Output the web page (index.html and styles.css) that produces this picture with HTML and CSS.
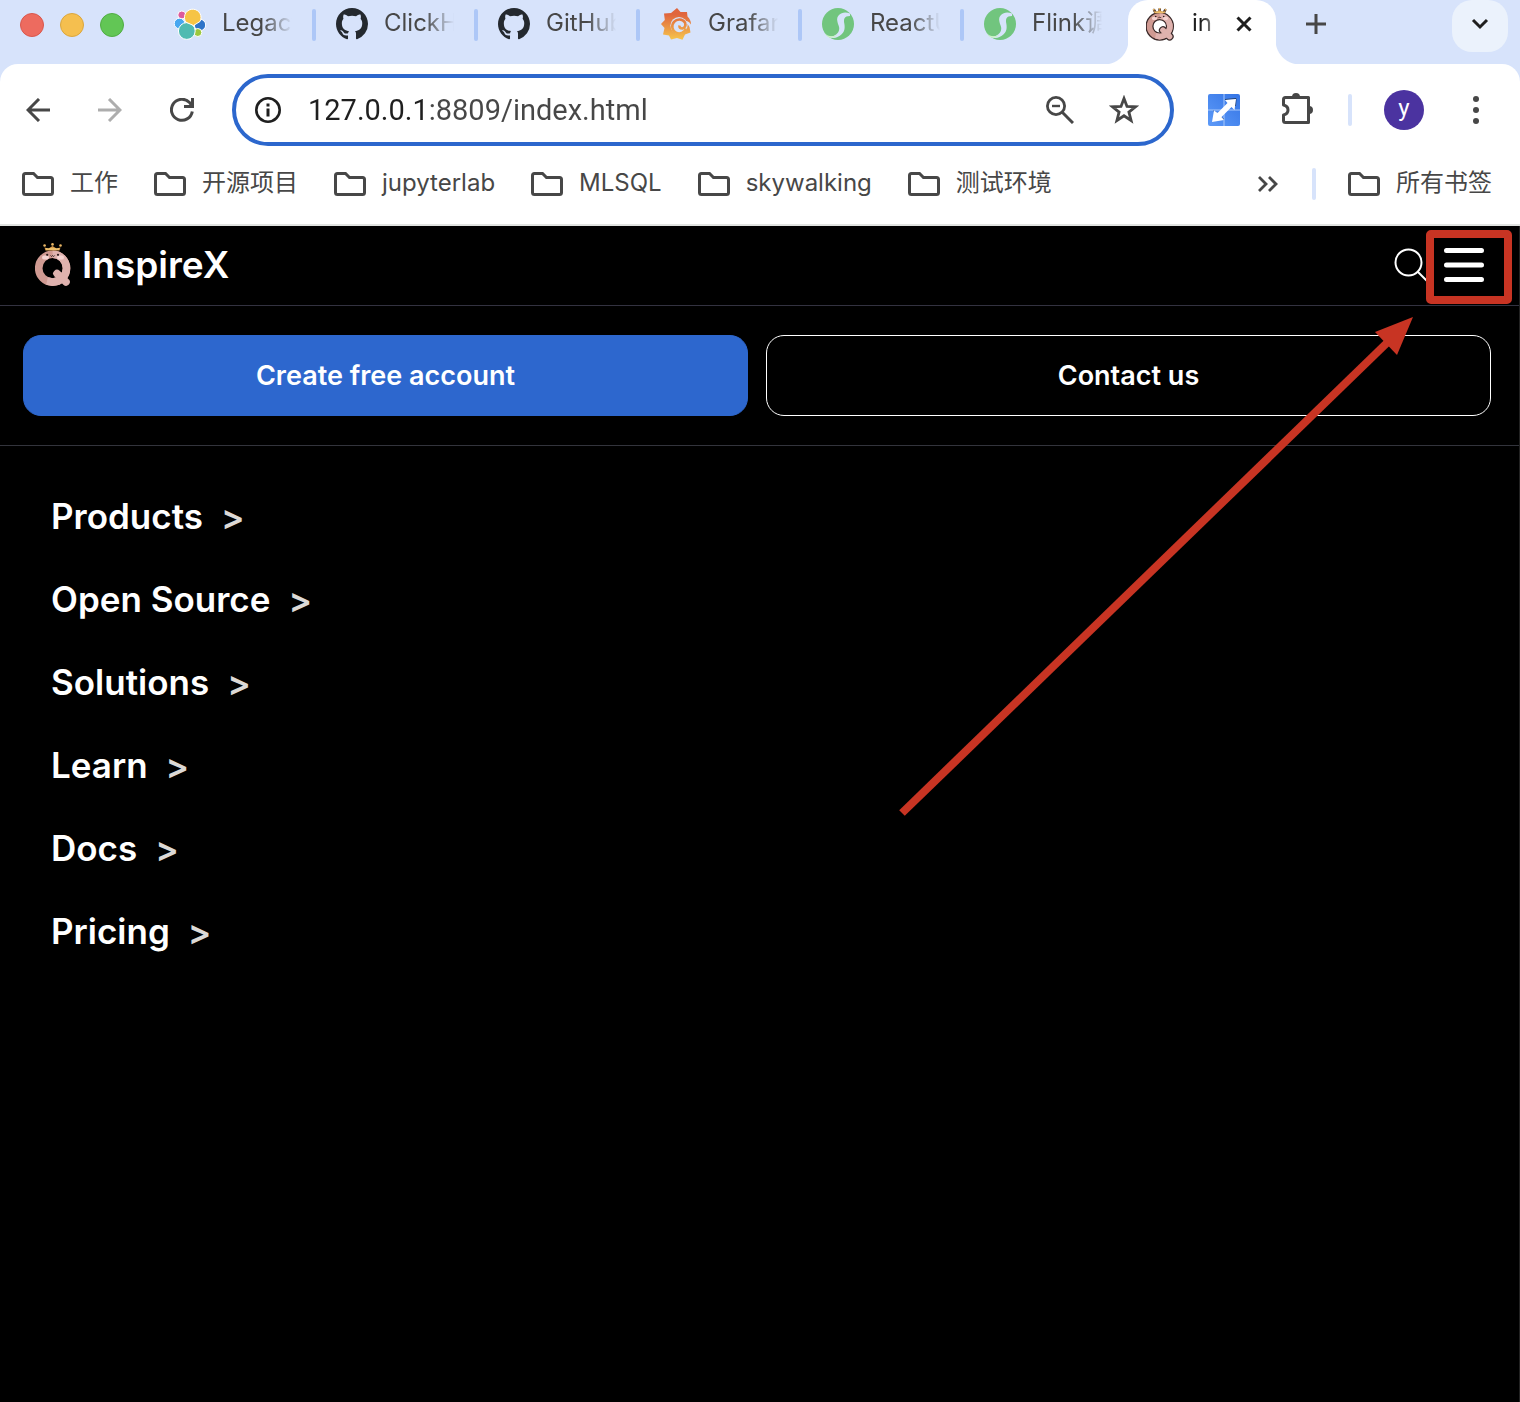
FILE: index.html
```html
<!DOCTYPE html>
<html lang="zh-CN">
<head>
<meta charset="utf-8">
<meta name="viewport" content="width=device-width, initial-scale=1">
<title>InspireX</title>
<link rel="stylesheet" href="styles.css">
</head>
<body>
<svg class="sprite" aria-hidden="true">
  <symbol id="github" viewBox="0 0 16 16"><path fill="#24292f" d="M8 0C3.58 0 0 3.58 0 8c0 3.54 2.29 6.53 5.47 7.59.4.07.55-.17.55-.38 0-.19-.01-.82-.01-1.49-2.01.37-2.53-.49-2.69-.94-.09-.23-.48-.94-.82-1.13-.28-.15-.68-.52-.01-.53.63-.01 1.08.58 1.23.82.72 1.21 1.87.87 2.33.66.07-.52.28-.87.51-1.07-1.78-.2-3.64-.89-3.64-3.95 0-.87.31-1.59.82-2.15-.08-.2-.36-1.02.08-2.12 0 0 .67-.21 2.2.82.64-.18 1.32-.27 2-.27s1.36.09 2 .27c1.53-1.04 2.2-.82 2.2-.82.44 1.1.16 1.92.08 2.12.51.56.82 1.27.82 2.15 0 3.07-1.87 3.75-3.65 3.95.29.25.54.73.54 1.48 0 1.07-.01 1.93-.01 2.2 0 .21.15.46.55.38A8.01 8.01 0 0 0 16 8c0-4.42-3.58-8-8-8z"/></symbol>
  <symbol id="skywave" viewBox="0 0 32 32"><circle cx="16" cy="16" r="16" fill="#71c57e"/><path fill="#d7e3fb" d="M28 5.500C21 2.500 14 6.500 15.300 13C16 17.500 18.300 19 16.800 23C15 27 11.500 28.600 7 28.700C10 30.500 13 30.200 15.500 29C22.500 25.500 23.200 21.500 22.400 16C21.500 11 22 8 28 8Z"/><path fill="#c9f3c4" d="M2.500 25C6 29 12 29 15.500 26.500C12 31 7 30.500 4.500 27.500Z"/></symbol>
  <symbol id="folder" viewBox="0 0 32 24"><path d="M3.500 1.500H11.500L15.500 5.500H28.500Q30.500 5.500 30.500 7.500V20.500Q30.500 22.500 28.500 22.500H3.500Q1.500 22.500 1.500 20.500V3.500Q1.500 1.500 3.500 1.500Z" fill="none" stroke="#474747" stroke-width="3"/></symbol>
  <symbol id="mascot" viewBox="0 0 36 44">
    <circle cx="17.600" cy="25.200" r="13.900" fill="none" stroke="#d09a92" stroke-width="7.600"/>
    <path d="M17.600 11.300A13.900 13.900 0 0 1 17.600 39.100L12 38" fill="none" stroke="#dfb2ae" stroke-width="7.600"/>
    <path d="M22 30.500L31 39" stroke="#dfb2ae" stroke-width="7.600" stroke-linecap="round"/>
    <path d="M9 14.500H12M24 14.500H27" stroke="#f5d4d2" stroke-width="4" stroke-linecap="round"/>
    <circle cx="12.200" cy="11.800" r="1.100" fill="#2a1d1d"/><circle cx="23" cy="11.800" r="1.100" fill="#2a1d1d"/>
    <path d="M15.600 12.500Q16.600 14.500 17.600 12.500Q18.600 14.500 19.600 12.500" fill="none" stroke="#2a1d1d"/>
    <path d="M9.500 4.500L13.500 5.500L17.500 3L21.500 5.500L25.500 4.500L24.500 7.500H10.500Z" fill="#d99d4d"/>
    <path d="M11 6H24" stroke="#ffe08a"/>
    <circle cx="9.600" cy="2.500" r="1.300" fill="#eab765"/><circle cx="17.500" cy="1.400" r="1.300" fill="#eab765"/><circle cx="25.500" cy="2.500" r="1.300" fill="#eab765"/>
  </symbol>
</svg>

<header class="browser">
  <div class="tab-strip">
    <div class="lights"><span class="light light-red"></span><span class="light light-yellow"></span><span class="light light-green"></span></div>
    <div class="tabs">
      <div class="tab">
        <svg class="favicon" viewBox="0 0 32 32"><g stroke="#fff"><circle cx="7.800" cy="7" r="4" fill="#dd5b9c"/><circle cx="5.500" cy="15.500" r="5.300" fill="#47a7f0"/><circle cx="26" cy="17" r="5.700" fill="#2d73c8"/><circle cx="23.800" cy="24.500" r="4" fill="#9bc83d"/><circle cx="12.800" cy="23" r="8.400" fill="#50bbb1"/><path d="M11 12.500A8.300 8.300 0 1 1 26 13.500L19.500 17.500L12 14.200Z" fill="#f6c445"/></g></svg>
        <span class="tab-title">Legacy</span>
      </div>
      <div class="tab"><svg class="favicon"><use href="#github"/></svg><span class="tab-title">ClickHouse</span></div>
      <div class="tab"><svg class="favicon"><use href="#github"/></svg><span class="tab-title">GitHub</span></div>
      <div class="tab">
        <svg class="favicon" viewBox="0 0 32 32"><defs><linearGradient id="flame" gradientUnits="userSpaceOnUse" x1="0" y1="0" x2="0" y2="32"><stop offset=".2" stop-color="#e0653e"/><stop offset="1" stop-color="#f6c64b"/></linearGradient></defs><path fill="url(#flame)" d="M17 0L20.500 4L27 4L27.500 8.500Q31 12 31 16L29.500 19L30.500 24.500L25 26.500L22.500 31.800L17 30L11 31.500L9 27.500L3 26.500L4.500 20L1 16L4.800 12L4 5.500L11 5Z"/><circle cx="19" cy="17.500" r="8.600" fill="#d7e3fb"/><path d="M25 14Q29 14.500 30.500 18.500" fill="none" stroke="#d7e3fb" stroke-width="2.500"/><path d="M26 20.500A7 7 0 1 1 25 14.500Q26.500 19 22.500 20.500Q19 20.500 19.500 17.500" fill="none" stroke="url(#flame)" stroke-width="2.600"/></svg>
        <span class="tab-title">Grafana</span>
      </div>
      <div class="tab"><svg class="favicon"><use href="#skywave"/></svg><span class="tab-title">ReactUI</span></div>
      <div class="tab"><svg class="favicon"><use href="#skywave"/></svg><span class="tab-title">Flink调优</span></div>
      <div class="tab tab-active">
        <svg class="favicon-active" viewBox="-1 -1 38 46"><g fill="none" stroke="#3a2a2a" stroke-linecap="round"><circle cx="17.600" cy="25.200" r="13.900" stroke-width="11"/><path d="M22 30.500L31 39" stroke-width="11"/><path d="M10 3L12 7H23L25 3M17.500 2V7" stroke-width="3.500"/></g><use href="#mascot" width="36" height="44"/></svg>
        <span class="tab-title">index</span>
        <button class="icon-button" aria-label="Close tab"><svg width="16" height="16" viewBox="0 0 16 16"><path d="M1.500 1.500L14.500 14.500M14.500 1.500L1.500 14.500" stroke="#1f1f1f" stroke-width="3"/></svg></button>
      </div>
    </div>
    <button class="icon-button new-tab" aria-label="New tab"><svg width="20" height="20" viewBox="0 0 20 20"><path d="M10 0V20M0 10H20" stroke="#474747" stroke-width="3"/></svg></button>
    <button class="icon-button tab-search" aria-label="Search tabs"><svg width="18" height="12" viewBox="0 0 18 12"><path d="M2 2L9 9L16 2" fill="none" stroke="#1f1f1f" stroke-width="3"/></svg></button>
  </div>

  <div class="toolbar">
    <div class="nav-buttons">
      <button class="icon-button" aria-label="Back"><svg width="24" height="24" viewBox="0 0 24 24"><path d="M24 12H2M13 1L2 12L13 23" fill="none" stroke="#474747" stroke-width="3"/></svg></button>
      <button class="icon-button" aria-label="Forward" disabled><svg width="24" height="24" viewBox="0 0 24 24"><path d="M0 12H22M11 1L22 12L11 23" fill="none" stroke="#adadad" stroke-width="3"/></svg></button>
      <button class="icon-button" aria-label="Reload"><svg width="24" height="24" viewBox="0 0 24 24"><path d="M22.300 13.500A10.500 10.500 0 1 1 19.500 4.500L22 8" fill="none" stroke="#474747" stroke-width="3"/><path d="M21 0H24V10H14V7H21Z" fill="#474747"/></svg></button>
    </div>
    <div class="omnibox">
      <button class="icon-button" aria-label="Site information"><svg width="26" height="26" viewBox="0 0 26 26"><circle cx="13" cy="13" r="11.700" fill="none" stroke="#1f1f1f" stroke-width="2.600"/><path d="M13 11.500V19.500M13 6.500V9.500" stroke="#1f1f1f" stroke-width="3"/></svg></button>
      <input class="address" type="text" aria-label="Address" value="127.0.0.1:8809/index.html">
      <button class="icon-button" aria-label="Zoom"><svg width="28" height="28" viewBox="0 0 28 28"><circle cx="10" cy="10" r="8.600" fill="none" stroke="#474747" stroke-width="2.800"/><path d="M16 16L27 27" stroke="#474747" stroke-width="3"/><path d="M6 10H14" stroke="#474747" stroke-width="2.400"/></svg></button>
      <button class="icon-button" aria-label="Bookmark this page"><svg width="30" height="30" viewBox="0 0 30 30"><path d="M15 3.500L18 11.400L26.500 11.800L19.900 17.100L22.100 25.500L15 20.800L7.900 25.500L10.100 17.100L3.500 11.800L12 11.400Z" fill="none" stroke="#474747" stroke-width="2.800"/></svg></button>
    </div>
    <div class="tools">
      <button class="icon-button" aria-label="Resize extension"><svg width="32" height="32" viewBox="0 0 32 32"><defs><linearGradient id="tile" x1="1" y1="0" x2="0" y2="1"><stop stop-color="#3474e5"/><stop offset="1" stop-color="#5d9af8"/></linearGradient></defs><rect width="32" height="32" rx="2" fill="url(#tile)"/><path d="M16 0V32M0 16H32" stroke="#a9c9fb"/><path d="M17 5.500L28 4.500L27.500 12M5.500 17L10 20M13 23L16 25.500" fill="none" stroke="#263f68"/><path d="M28 5L26.500 16L23.500 13L13.500 23L16 26L4 28L6 16.500L9.500 19L19.500 9L17 6Z" fill="#fff"/></svg></button>
      <button class="icon-button" aria-label="Extensions"><svg width="32" height="34" viewBox="0 0 32 34"><path d="M3.500 5.500H26.500V30.500H3.500Q1.500 30.500 1.500 28.500V23Q6 22 6 18Q6 14 1.500 13V7.500Q1.500 5.500 3.500 5.500Z" fill="none" stroke="#474747" stroke-width="3" stroke-linejoin="round"/><path d="M10 5A4 4 0 0 1 18 5ZM27 14A4 4 0 0 1 27 22Z" fill="#474747"/></svg></button>
      <span class="divider"></span>
      <button class="avatar" aria-label="Profile">y</button>
      <button class="icon-button menu-dots" aria-label="Browser menu"><svg width="8" height="28" viewBox="0 0 8 28"><g fill="#474747"><circle cx="4" cy="3" r="3"/><circle cx="4" cy="14" r="3"/><circle cx="4" cy="25" r="3"/></g></svg></button>
    </div>
  </div>

  <nav class="bookmarks" aria-label="Bookmarks">
    <a class="bookmark" href="#"><svg class="folder"><use href="#folder"/></svg><span class="bookmark-name">工作</span></a>
    <a class="bookmark" href="#"><svg class="folder"><use href="#folder"/></svg><span class="bookmark-name">开源项目</span></a>
    <a class="bookmark" href="#"><svg class="folder"><use href="#folder"/></svg><span class="bookmark-name">jupyterlab</span></a>
    <a class="bookmark" href="#"><svg class="folder"><use href="#folder"/></svg><span class="bookmark-name">MLSQL</span></a>
    <a class="bookmark" href="#"><svg class="folder"><use href="#folder"/></svg><span class="bookmark-name">skywalking</span></a>
    <a class="bookmark" href="#"><svg class="folder"><use href="#folder"/></svg><span class="bookmark-name">测试环境</span></a>
    <div class="bookmarks-end">
      <button class="icon-button" aria-label="More bookmarks"><svg width="20" height="16" viewBox="0 0 20 16"><path d="M1 1L8 8L1 15M11 1L18 8L11 15" fill="none" stroke="#474747" stroke-width="2.800"/></svg></button>
      <span class="divider"></span>
      <a class="bookmark" href="#"><svg class="folder"><use href="#folder"/></svg><span class="bookmark-name">所有书签</span></a>
    </div>
  </nav>
</header>

<main class="site">
  <div class="site-header">
    <a class="brand" href="#"><svg class="brand-mark"><use href="#mascot"/></svg>InspireX</a>
    <div class="site-actions">
      <button class="icon-button" aria-label="Search"><svg width="34" height="34" viewBox="0 0 34 34"><circle cx="14.500" cy="14.500" r="13" fill="none" stroke="#fff" stroke-width="2"/><path d="M23.500 23.500L33 33" stroke="#fff" stroke-width="2"/></svg></button>
      <button class="icon-button" aria-label="Menu"><svg width="40" height="34" viewBox="0 0 40 34"><path d="M2.500 2.500H37.500M2.500 17H37.500M2.500 31.500H37.500" stroke="#fff" stroke-width="5" stroke-linecap="round"/></svg></button>
    </div>
  </div>
  <div class="cta-row">
    <button class="cta cta-primary">Create free account</button>
    <button class="cta">Contact us</button>
  </div>
  <nav class="menu" aria-label="Main">
    <a class="menu-item" href="#">Products <span class="caret">&gt;</span></a>
    <a class="menu-item" href="#">Open Source <span class="caret">&gt;</span></a>
    <a class="menu-item" href="#">Solutions <span class="caret">&gt;</span></a>
    <a class="menu-item" href="#">Learn <span class="caret">&gt;</span></a>
    <a class="menu-item" href="#">Docs <span class="caret">&gt;</span></a>
    <a class="menu-item" href="#">Pricing <span class="caret">&gt;</span></a>
  </nav>
  <svg class="annotation" viewBox="0 0 640 600" aria-hidden="true">
    <rect x="550" y="8" width="78" height="66" rx="1" fill="none" stroke="#c83423" stroke-width="8" stroke-linejoin="round"/>
    <path d="M22 587L512 112" stroke="#c83423" stroke-width="8"/>
    <path d="M533 91L495 106L517 129Z" fill="#c83423"/>
  </svg>
</main>
</body>
</html>
```
FILE: styles.css
```css
* { box-sizing: border-box; }

body {
  margin: 0;
  min-height: 100vh;
  display: flex;
  flex-direction: column;
  background: #000;
  font-family: Inter, "Noto Sans CJK SC", sans-serif;
}

a { color: inherit; text-decoration: none; }
button { font: inherit; color: inherit; cursor: pointer; }
svg { display: block; flex: none; }

.sprite { position: absolute; width: 0; height: 0; }

.icon-button {
  display: flex;
  align-items: center;
  justify-content: center;
  flex: none;
  padding: 0;
  border: 0;
  background: none;
}

/* Browser window */
.browser {
  background: #d7e3fb;
  border-bottom: 2px solid #e1e3e1;
  color: #474747;
  font-size: 24px;
}

.tab-strip { display: flex; height: 64px; padding: 0 12px 0 20px; }

.lights { display: flex; gap: 16px; padding-top: 13px; }
.light { width: 24px; height: 24px; border: 1px solid; border-radius: 50%; }
.light-red { background: #ed6b5f; border-color: #d9574c; }
.light-yellow { background: #f5bf4f; border-color: #dba63d; }
.light-green { background: #62c655; border-color: #50ad43; }

.tabs { display: flex; margin-left: 50px; }
.tab { display: flex; width: 162px; height: 48px; align-items: center; }
.tab:not(.tab-active)::after {
  content: "";
  width: 4px;
  height: 32px;
  margin: 2px 0 0 16px;
  border-radius: 2px;
  background: #adc7f7;
}
.tab:nth-child(6) { width: 144px; }
.tab:nth-child(6)::after { display: none; }
.favicon { width: 32px; height: 32px; }
.tab-title {
  width: 74px;
  height: 48px;
  margin-left: 16px;
  overflow: hidden;
  line-height: 46px;
  white-space: nowrap;
  -webkit-mask-image: linear-gradient(90deg, #000 55%, transparent 95%);
  mask-image: linear-gradient(90deg, #000 55%, transparent 95%);
}

.tab-active {
  position: relative;
  width: 148px;
  height: 64px;
  padding: 0 24px 16px 18px;
  border-radius: 20px 20px 0 0;
  background: #fff;
  color: #1f1f1f;
}
.tab-active::before,
.tab-active::after {
  content: "";
  position: absolute;
  bottom: 0;
  width: 24px;
  height: 24px;
}
.tab-active::before {
  right: 100%;
  background: radial-gradient(circle at 0 0, transparent 24px, #fff 25px);
}
.tab-active::after {
  left: 100%;
  background: radial-gradient(circle at 100% 0, transparent 24px, #fff 25px);
}
.tab-active .tab-title {
  width: 20px;
  margin: 0 24px 0 18px;
  -webkit-mask-image: linear-gradient(90deg, #000 50%, #0008);
  mask-image: linear-gradient(90deg, #000 50%, #0008);
}
.favicon-active { width: 28px; height: 34px; }

.new-tab { width: 20px; height: 48px; margin-left: 30px; }
.tab-search {
  width: 56px;
  height: 52px;
  margin-left: auto;
  padding-bottom: 4px;
  border-radius: 20px;
  background: #ebf2fc;
}

.toolbar {
  display: flex;
  align-items: center;
  height: 90px;
  padding: 2px 40px 0 26px;
  border-radius: 18px 18px 0 0;
  background: #fff;
}
.nav-buttons { display: flex; gap: 48px; }
.omnibox {
  display: flex;
  flex: 1;
  align-items: center;
  height: 72px;
  margin-left: 38px;
  padding: 0 31px 0 19px;
  border: 4px solid #2c67cd;
  border-radius: 36px;
}
.address {
  flex: 1;
  min-width: 0;
  margin: 0 34px 0 27px;
  padding: 0;
  border: 0;
  outline: 0;
  background: linear-gradient(90deg, #1f1f1f 119px, #474747 119px);
  -webkit-background-clip: text;
  background-clip: text;
  color: transparent;
  font-family: Roboto, sans-serif;
  font-size: 29px;
}
.address + .icon-button { margin-right: 35px; }
.tools { display: flex; align-items: center; margin-left: 34px; }
.tools .icon-button + .icon-button { margin-left: 42px; }
.tools [aria-label="Extensions"] { padding-bottom: 2px; }
.divider { width: 4px; height: 32px; border-radius: 2px; background: #d7e3fb; }
.tools .divider { margin: 0 32px 0 34px; }
.avatar {
  width: 40px;
  height: 40px;
  padding: 0 0 4px;
  border: 0;
  border-radius: 50%;
  background: #4b33a0;
  color: #fff;
  font-family: Roboto, sans-serif;
  font-size: 24px;
  line-height: 36px;
}
.tools .menu-dots { margin-left: 48px; }

.bookmarks {
  display: flex;
  align-items: center;
  gap: 36px;
  height: 70px;
  padding: 0 28px 10px 22px;
  background: #fff;
}
.bookmark { display: flex; align-items: center; gap: 16px; white-space: nowrap; }
.bookmark-name { height: 32px; line-height: 30px; }
.folder { width: 32px; height: 24px; }
.bookmarks-end { display: flex; align-items: center; margin-left: auto; }
.bookmarks-end .divider { margin: 0 32px 0 34px; }

/* InspireX site */
.site {
  position: relative;
  flex: 1;
  border-right: 1px solid #222;
  background: #000;
  color: #fff;
  font-weight: 600;
}
.site-header {
  display: flex;
  align-items: center;
  justify-content: space-between;
  height: 80px;
  padding: 0 35px 2px;
  border-bottom: 1px solid #333240;
}
.brand { display: flex; align-items: center; gap: 11px; font-size: 37px; }
.brand-mark { width: 36px; height: 44px; }
.site-actions { display: flex; align-items: center; gap: 16px; }

.cta-row {
  display: grid;
  grid-template-columns: 1fr 1fr;
  gap: 18px;
  padding: 29px 28px 29px 23px;
  border-bottom: 1px solid #33343c;
}
.cta {
  height: 81px;
  border: 1px solid #fff;
  border-radius: 18px;
  background: none;
  font-size: 27px;
  font-weight: 600;
}
.cta-primary { border-color: #2d67ce; background: #2d67ce; }

.menu { padding: 28px 51px; }
.menu-item { display: flex; align-items: center; gap: 18px; height: 83px; font-size: 35px; }
.caret { padding-top: 2px; color: #dcd9d6; font-size: 35px; }

.annotation {
  position: absolute;
  top: 0;
  right: -1px;
  width: 640px;
  height: 600px;
  pointer-events: none;
}
```
